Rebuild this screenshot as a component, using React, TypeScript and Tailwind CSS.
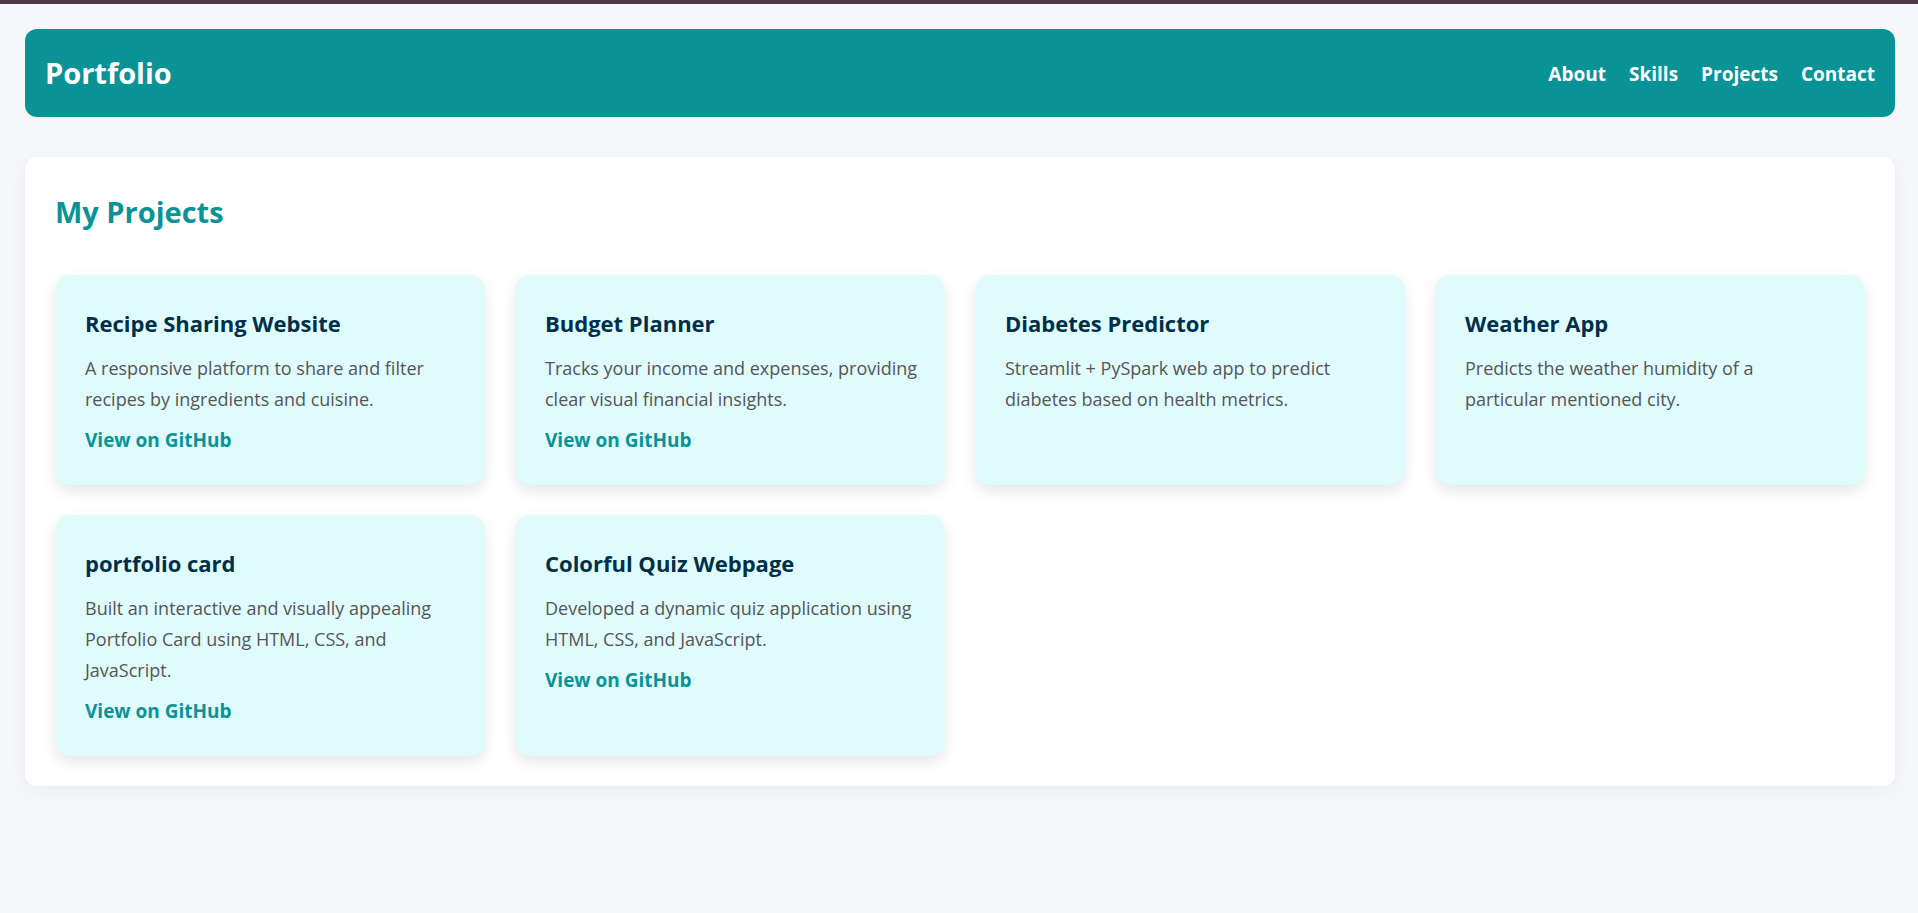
const navLinks = ["About", "Skills", "Projects", "Contact"];

type Project = { title: string; text: string; link?: boolean };

const projects: Project[] = [
  { title: "Recipe Sharing Website", text: "A responsive platform to share and filter recipes by ingredients and cuisine.", link: true },
  { title: "Budget Planner", text: "Tracks your income and expenses, providing clear visual financial insights.", link: true },
  { title: "Diabetes Predictor", text: "Streamlit + PySpark web app to predict diabetes based on health metrics." },
  { title: "Weather App", text: "Predicts the weather humidity of a particular mentioned city." },
  { title: "portfolio card", text: "Built an interactive and visually appealing Portfolio Card using HTML, CSS, and JavaScript.", link: true },
  { title: "Colorful Quiz Webpage", text: "Developed a dynamic quiz application using HTML, CSS, and JavaScript.", link: true },
];

function ProjectCard({ title, text, link }: Project) {
  return (
    <article className="rounded-[15px] bg-[#e0fbfc] py-[30px] pr-[27px] pl-[30px] shadow-[0_6px_15px_rgba(0,0,0,0.1)]">
      <h3 className="mb-3 text-[22px] leading-[36px] font-bold text-[#003049]">{title}</h3>
      <p className="mb-2.5 text-[18px] leading-[31px] text-[#555555]">{text}</p>
      {link && (
        <a href="#github" className="block text-[19px] leading-[30px] font-bold text-[#0a9396]">
          View on GitHub
        </a>
      )}
    </article>
  );
}

export default function App() {
  return (
    <div className="min-h-screen border-t-4 border-[#4a3a48] bg-[#f5f7fb] pt-[25px] pr-[23px] pb-10 pl-[25px] font-['Open_Sans','Noto_Sans',sans-serif]">
      <header className="mb-10 flex h-[88px] items-center justify-between rounded-xl bg-[#0a9396] px-5 text-white">
        <h1 className="text-[29px] leading-[50px] font-bold">Portfolio</h1>
        <nav className="flex gap-[23px] pt-0.5 text-[19px] leading-[30px] font-bold">
          {navLinks.map((name) => (
            <a key={name} href={`#${name.toLowerCase()}`}>{name}</a>
          ))}
        </nav>
      </header>
      <main className="rounded-xl bg-white p-[30px] shadow-[0_4px_20px_rgba(0,0,0,0.05)]">
        <h2 className="mb-[38px] text-[29px] leading-[50px] font-bold text-[#0a9396]">My Projects</h2>
        <div className="grid grid-cols-[repeat(auto-fill,minmax(380px,1fr))] gap-[30px]">
          {projects.map((project) => (
            <ProjectCard key={project.title} {...project} />
          ))}
        </div>
      </main>
    </div>
  );
}
